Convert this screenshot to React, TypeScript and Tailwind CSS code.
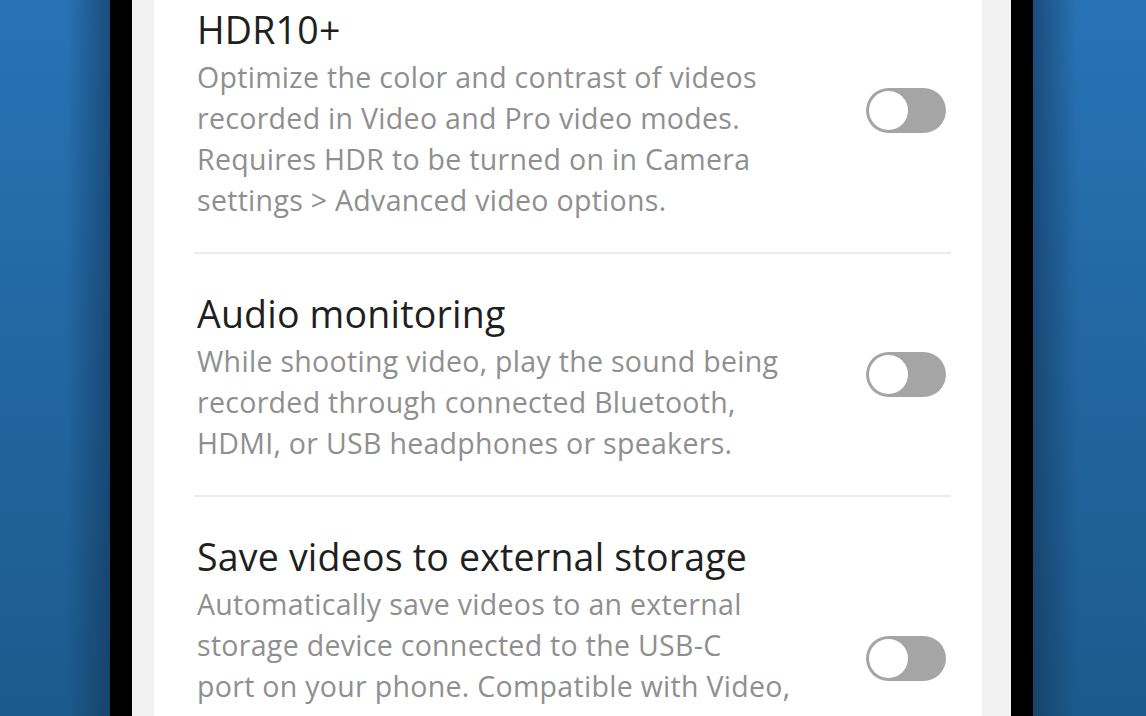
import React from "react";

type Setting = {
  title: string;
  lines: string[];
};

const settings: Setting[] = [
  {
    title: "HDR10+",
    lines: [
      "Optimize the color and contrast of videos",
      "recorded in Video and Pro video modes.",
      "Requires HDR to be turned on in Camera",
      "settings > Advanced video options.",
    ],
  },
  {
    title: "Audio monitoring",
    lines: [
      "While shooting video, play the sound being",
      "recorded through connected Bluetooth,",
      "HDMI, or USB headphones or speakers.",
    ],
  },
  {
    title: "Save videos to external storage",
    lines: [
      "Automatically save videos to an external",
      "storage device connected to the USB-C",
      "port on your phone. Compatible with Video,",
      "Pro video, Portrait Video, Slow motion, and",
      "Hyperlapse modes.",
    ],
  },
];

const Toggle = () => (
  <div className="mb-[8px] flex h-[45px] w-[80px] shrink-0 items-center rounded-full bg-[#a5a5a5] px-[3px]">
    <div className="h-[39px] w-[39px] rounded-full bg-white" />
  </div>
);

const Row = ({ item, first }: { item: Setting; first: boolean }) => (
  <div
    className={`flex items-center justify-between gap-6 pb-[31px] ${
      first ? "pt-[8px]" : "border-t-2 border-[#ececec] pt-[38px]"
    }`}
  >
    <div className="pl-[3px]">
      <h3 className="text-[37.5px] leading-[44px] tracking-[0.2px] text-[#1f1f1f]">{item.title}</h3>
      <p className="mt-[5px] text-[28.5px] leading-[41px] tracking-[0.3px] text-[#8f8f8f]">
        {item.lines.map((l, i) => (
          <span key={i} className="block whitespace-nowrap">
            {l}
          </span>
        ))}
      </p>
    </div>
    <div className="pr-[5px]">
      <Toggle />
    </div>
  </div>
);

export default function App() {
  return (
    <div
      className="flex h-[716px] w-[1146px] overflow-hidden bg-gradient-to-b from-[#2873b6] to-[#1c5a8c]"
      style={{ fontFamily: "'Open Sans', 'Noto Sans', sans-serif" }}
    >
      <div className="w-[110px] shrink-0 bg-[linear-gradient(to_right,transparent_60%,rgba(18,52,86,0.6))]" />
      <div className="flex w-[923px] shrink-0 border-x-[22px] border-black bg-[#f2f2f2] px-[22px]">
        <div className="flex-1 bg-white pl-[40px] pr-[31px]">
          {settings.map((s, i) => (
            <Row key={s.title} item={s} first={i === 0} />
          ))}
        </div>
        <div className="w-[7px]" />
      </div>
      <div className="flex-1 bg-[linear-gradient(to_left,transparent_60%,rgba(18,52,86,0.6))]" />
    </div>
  );
}
